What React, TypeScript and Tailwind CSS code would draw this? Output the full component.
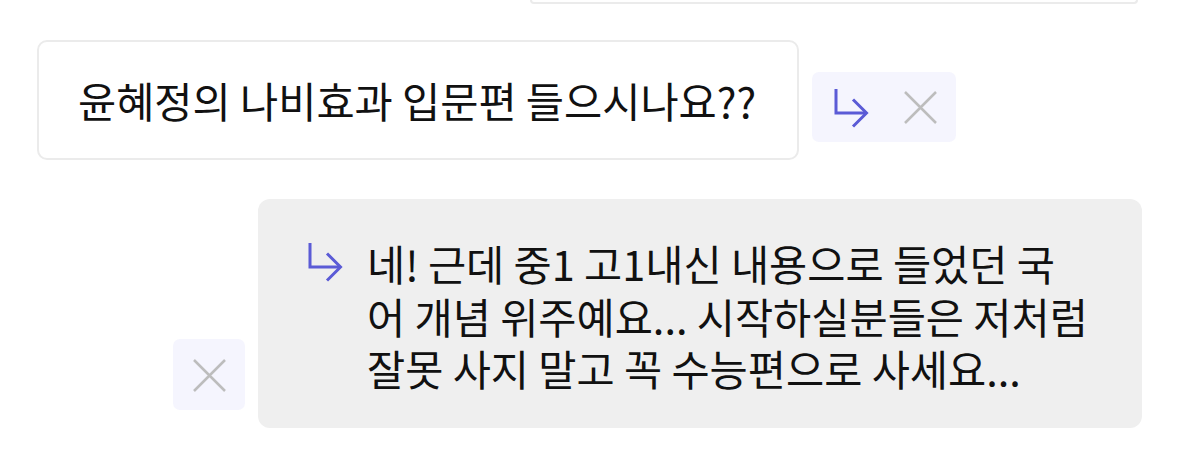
const font = { fontFamily: '"Noto Sans CJK KR", "Noto Sans", sans-serif' }

function ReplyArrow() {
  return (
    <svg width="48" height="48" viewBox="0 0 48 48" fill="none">
      <path
        d="M12 6 V30 H42"
        stroke="#5b5bd6"
        strokeWidth="3"
        strokeLinejoin="miter"
      />
      <path
        d="M29 16.5 L42.5 30 L29 43.5"
        stroke="#5b5bd6"
        strokeWidth="3"
        strokeLinejoin="miter"
      />
    </svg>
  )
}

function CloseX() {
  return (
    <svg width="48" height="48" viewBox="0 0 48 48" fill="none">
      <path d="M9 9 L40 40 M40 9 L9 40" stroke="#bdbdbd" strokeWidth="2.5" />
    </svg>
  )
}

export default function App() {
  return (
    <div className="w-[1178px] h-[450px] bg-white overflow-hidden text-[#111]" style={font}>
      {/* previous message, cut off at the top */}
      <div className="ml-[530px] w-[608px] h-[4px] border-2 border-t-0 border-[#ebebeb] rounded-b-[8px]" />

      {/* question bubble with actions */}
      <div className="mt-[36px] flex items-start">
        <div className="ml-[37px] w-[762px] h-[120px] border-2 border-[#ebebeb] rounded-[10px] flex items-center pl-[39px]">
          <span className="text-[41.5px] leading-[52px] whitespace-nowrap">
            윤혜정의 나비효과 입문편 들으시나요??
          </span>
        </div>
        <div className="ml-[13px] mt-[32px] w-[144px] h-[70px] rounded-[7px] bg-[#f5f5fe] flex">
          <div className="w-[72px] h-full flex items-center justify-center">
            <ReplyArrow />
          </div>
          <div className="w-[72px] h-full flex items-center justify-center">
            <CloseX />
          </div>
        </div>
      </div>

      {/* reply bubble */}
      <div className="mt-[39px] flex items-end">
        <div className="ml-[173px] mb-[18px] w-[72px] h-[71px] rounded-[7px] bg-[#f5f5fe] flex items-center justify-center">
          <CloseX />
        </div>
        <div className="ml-[13px] w-[884px] h-[229px] rounded-[12px] bg-[#efefef] flex items-start pl-[40px] pt-[38px]">
          <ReplyArrow />
          <p className="ml-[21px] text-[41.5px] leading-[52.5px] whitespace-nowrap">
            네! 근데 중1 고1내신 내용으로 들었던 국
            <br />
            어 개념 위주예요... 시작하실분들은 저처럼
            <br />
            잘못 사지 말고 꼭 수능편으로 사세요...
          </p>
        </div>
      </div>
    </div>
  )
}
